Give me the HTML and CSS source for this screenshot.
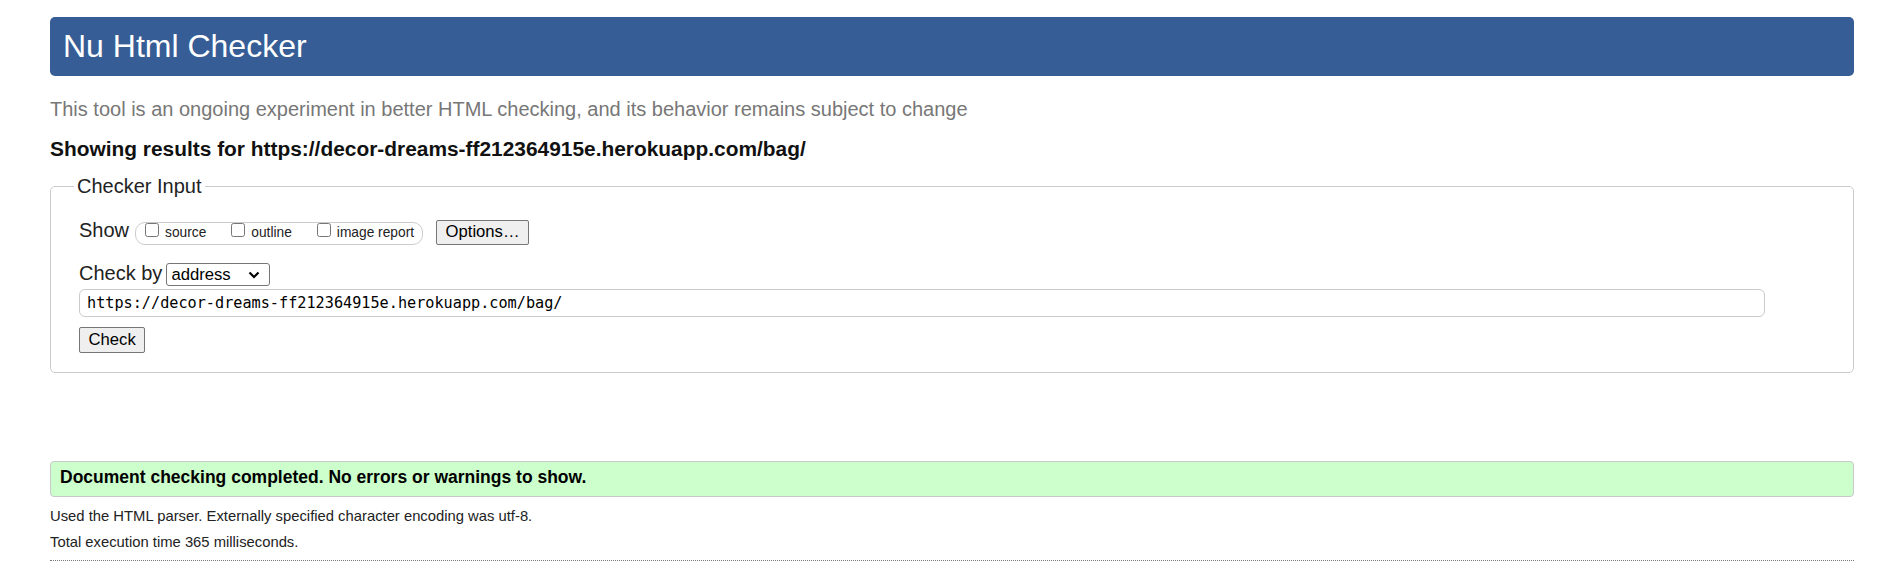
FILE: index.html
```html
<!DOCTYPE html>
<html lang="en">
<head>
<meta charset="utf-8">
<title>Nu Html Checker</title>
<link rel="stylesheet" href="styles.css">
</head>
<body>
<h1 class="title">Nu Html Checker</h1>
<p class="intro">This tool is an ongoing experiment in better HTML checking, and its behavior remains subject to change</p>
<p class="results">Showing results for https://decor-dreams-ff212364915e.herokuapp.com/bag/</p>
<form class="checker">
  <fieldset class="checker-input">
    <legend class="checker-legend">Checker Input</legend>
    <div class="show-row">
      <span class="row-label">Show</span>
      <div class="show-opts">
        <label class="opt"><input type="checkbox" class="cb"><span class="opt-text">source</span></label>
        <label class="opt"><input type="checkbox" class="cb"><span class="opt-text">outline</span></label>
        <label class="opt"><input type="checkbox" class="cb"><span class="opt-text">image report</span></label>
      </div>
      <button type="button" class="btn btn-options">Options…</button>
    </div>
    <div class="checkby-row">
      <span class="row-label">Check by</span>
      <div class="select-wrap">
        <select class="select"><option>address</option></select>
        <svg class="chevron" width="12" height="8" viewBox="0 0 12 8"><path d="M1.5 1.5 L6 6 L10.5 1.5" fill="none" stroke="#000" stroke-width="2.2"/></svg>
      </div>
    </div>
    <input class="url" type="text" value="https://decor-dreams-ff212364915e.herokuapp.com/bag/">
    <div class="submit-row">
      <button type="button" class="btn btn-check">Check</button>
    </div>
  </fieldset>
</form>
<div class="success">Document checking completed. No errors or warnings to show.</div>
<p class="note note-first">Used the HTML parser. Externally specified character encoding was utf-8.</p>
<p class="note">Total execution time 365 milliseconds.</p>
<hr class="dotted">
</body>
</html>
```
FILE: styles.css
```css
html, body {
  background: #fff;
}
body {
  margin: 0;
  padding: 17px 35px 20px 50px;
  font-family: "Liberation Sans", Arial, sans-serif;
  color: #222;
}
.title {
  margin: 0;
  height: 59px;
  padding: 0 13px;
  line-height: 59px;
  font-size: 32px;
  font-weight: normal;
  color: #fff;
  background: #365d95;
  border-radius: 5px;
}
.intro {
  margin: 21px 0 0;
  font-size: 20px;
  line-height: 24px;
  color: #777;
}
.results {
  margin: 16px 0 0;
  font-size: 20.9px;
  line-height: 24px;
  font-weight: bold;
  color: #111;
}
.checker {
  margin: 14px 0 0;
}
.checker-input {
  margin: 0;
  min-width: 0;
  border: 1px solid #ccc;
  border-radius: 5px;
  padding: 21px 28px 18.5px 28px;
}
.checker-legend {
  font-size: 20px;
  line-height: 23px;
  padding: 0 3px;
  margin-left: -5px;
  color: #222;
}
.show-row {
  display: flex;
  align-items: flex-start;
}
.row-label {
  font-size: 20px;
  line-height: 23px;
  color: #222;
}
.show-opts {
  display: flex;
  align-items: flex-start;
  gap: 25px;
  box-sizing: border-box;
  height: 23px;
  margin: 2.5px 0 0 6px;
  padding: 0 8px 0 9px;
  border: 1px solid #ccc;
  border-radius: 10px;
}
.opt {
  display: flex;
  align-items: flex-start;
  gap: 6px;
}
.cb {
  width: 14px;
  height: 14px;
  margin: 0;
}
.opt-text {
  font-size: 13.75px;
  line-height: 16px;
  margin-top: 2px;
  color: #222;
}
.btn {
  box-sizing: border-box;
  font-family: "Liberation Sans", Arial, sans-serif;
  font-size: 16.67px;
  color: #000;
  background: #efefef;
  border: 1px solid #767676;
  border-radius: 2px;
  padding: 0 8.5px;
}
.btn-options {
  height: 25px;
  margin: 0.5px 0 0 13px;
}
.checkby-row {
  display: flex;
  align-items: flex-start;
  margin-top: 17.5px;
}
.select-wrap {
  position: relative;
  margin: 1px 0 0 4px;
}
.select {
  appearance: none;
  -webkit-appearance: none;
  box-sizing: border-box;
  width: 104px;
  height: 23px;
  font-family: "Liberation Sans", Arial, sans-serif;
  font-size: 16.67px;
  color: #000;
  background: #fff;
  border: 1px solid #767676;
  border-radius: 3px;
  padding: 0 4px;
  display: block;
}
.chevron {
  position: absolute;
  right: 10px;
  top: 8px;
  pointer-events: none;
}
.url {
  display: block;
  box-sizing: border-box;
  width: calc(100% - 60px);
  height: 28px;
  margin: 3px 0 0;
  padding: 0 7px;
  border: 1px solid #ccc;
  border-radius: 6px;
  font-family: "DejaVu Sans Mono", "Liberation Mono", monospace;
  font-size: 15.2px;
  color: #000;
}
.submit-row {
  margin-top: 10px;
  display: flex;
}
.btn-check {
  height: 26px;
}
.success {
  margin-top: 88px;
  box-sizing: border-box;
  height: 36px;
  padding: 0 9px;
  line-height: 30px;
  font-size: 17.5px;
  font-weight: bold;
  color: #000;
  background: #ccffcc;
  border: 1px solid #c8c8c8;
  border-radius: 4px;
}
.note {
  margin: 8px 0 0;
  font-size: 14.8px;
  line-height: 18px;
  color: #222;
}
.note-first {
  margin-top: 10px;
}
.dotted {
  margin: 9px 0 0;
  height: 0;
  border: 0;
  border-top: 1px dotted #777;
}
```
